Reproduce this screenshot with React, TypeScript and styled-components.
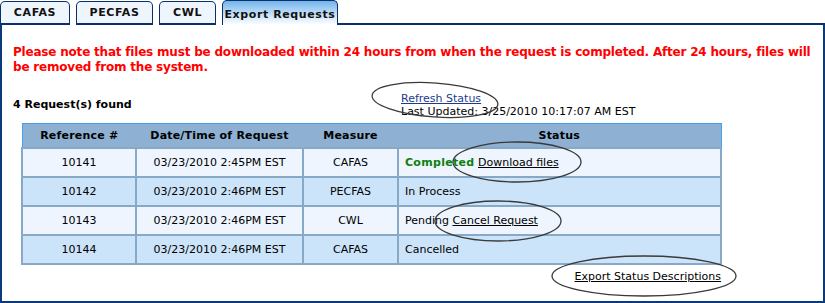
import React from 'react';
import styled, { createGlobalStyle } from 'styled-components';

const GlobalStyle = createGlobalStyle`
  html, body {
    margin: 0;
    padding: 0;
    background: #ffffff;
  }
  body {
    font-family: "DejaVu Sans", Verdana, sans-serif;
    font-size: 11px;
    color: #000;
  }
`;

const Page = styled.div`
  position: relative;
  width: 825px;
  height: 303px;
  overflow: hidden;
`;

const TabStrip = styled.div`
  display: flex;
  align-items: flex-end;
  height: 25px;
`;

const Tab = styled.div<{ $w: number; $active?: boolean }>`
  box-sizing: border-box;
  width: ${(p) => p.$w}px;
  height: ${(p) => (p.$active ? 25 : 24)}px;
  margin-right: 6px;
  display: flex;
  align-items: center;
  justify-content: center;
  border: 1px solid #0b2f6b;
  border-bottom: ${(p) => (p.$active ? 'none' : '2px solid #0b2f6b')};
  border-radius: 5px 5px 0 0;
  background: ${(p) =>
    p.$active
      ? 'linear-gradient(to bottom, #72b4ec 0%, #b6d9f7 45%, #ffffff 100%)'
      : '#eef5fd'};
  font-weight: bold;
  font-size: 11px;
  letter-spacing: 0.6px;
  color: #111;
  padding-top: ${(p) => (p.$active ? 2 : 0)}px;
`;

const TabFill = styled.div`
  flex: 1;
  height: 25px;
  box-sizing: border-box;
  border-bottom: 2px solid #0b2f6b;
  margin-left: -6px;
`;

const Panel = styled.div`
  box-sizing: border-box;
  height: 278px;
  border: 2px solid #0b3a7a;
  border-top: none;
  padding: 20px 0 0 11px;
`;

const Notice = styled.div`
  color: #ff0000;
  font-weight: bold;
  font-size: 12px;
  line-height: 15px;
  letter-spacing: -0.2px;
  padding-right: 4px;
`;

const InfoRow = styled.div`
  display: grid;
  grid-template-columns: 388px auto;
  align-items: end;
  margin-top: 15px;
  height: 28px;
`;

const Found = styled.div`
  font-weight: bold;
  line-height: 13px;
  margin-bottom: 7px;
`;

const Updated = styled.div`
  line-height: 13px;
`;

const BlueLink = styled.a`
  color: #1b3c8c;
  text-decoration: underline;
`;

const PlainLink = styled.a`
  color: #000;
  text-decoration: underline;
`;

const Table = styled.table`
  margin: 5px 0 0 8px;
  width: 701px;
  border-collapse: collapse;
  border: 1px solid #45a0ea;
`;

const Th = styled.th`
  height: 23px;
  padding: 0;
  background: #8eb0d2;
  font-weight: bold;
  font-size: 11px;
  border-bottom: 2px solid #87a9c6;
  letter-spacing: 0.2px;
`;

const Td = styled.td<{ $alt?: boolean; $left?: boolean }>`
  height: 27px;
  padding: 0 0 0 ${(p) => (p.$left ? 6 : 0)}px;
  text-align: ${(p) => (p.$left ? 'left' : 'center')};
  background: ${(p) => (p.$alt ? '#cce4fa' : '#eef5fe')};
  border: 2px solid #87a9c6;
  border-top: none;
`;

const Done = styled.span`
  color: #0e800e;
  font-weight: bold;
  letter-spacing: 0.3px;
`;

const Footer = styled.div`
  width: 708px;
  text-align: right;
  margin-top: 5px;
`;

const Marks = styled.svg`
  position: absolute;
  left: 0;
  top: 0;
  pointer-events: none;
`;

type Row = { ref: string; when: string; measure: string; status: React.ReactNode };

const rows: Row[] = [
  {
    ref: '10141',
    when: '03/23/2010 2:45PM EST',
    measure: 'CAFAS',
    status: (
      <>
        <Done>Completed</Done> <PlainLink href="#">Download files</PlainLink>
      </>
    ),
  },
  { ref: '10142', when: '03/23/2010 2:46PM EST', measure: 'PECFAS', status: 'In Process' },
  {
    ref: '10143',
    when: '03/23/2010 2:46PM EST',
    measure: 'CWL',
    status: (
      <>
        Pending <PlainLink href="#">Cancel Request</PlainLink>
      </>
    ),
  },
  { ref: '10144', when: '03/23/2010 2:46PM EST', measure: 'CAFAS', status: 'Cancelled' },
];

const App: React.FC = () => {
  return (
    <Page>
      <GlobalStyle />
      <TabStrip>
        <Tab $w={70}>CAFAS</Tab>
        <Tab $w={77}>PECFAS</Tab>
        <Tab $w={57}>CWL</Tab>
        <Tab $w={116} $active>
          Export Requests
        </Tab>
        <TabFill />
      </TabStrip>
      <Panel>
        <Notice>
          Please note that files must be downloaded within 24 hours from when the request is completed. After 24
          hours, files will be removed from the system.
        </Notice>
        <InfoRow>
          <Found>4 Request(s) found</Found>
          <Updated>
            <BlueLink href="#">Refresh Status</BlueLink>
            <br />
            Last Updated: 3/25/2010 10:17:07 AM EST
          </Updated>
        </InfoRow>
        <Table>
          <colgroup>
            <col style={{ width: 114 }} />
            <col style={{ width: 167 }} />
            <col style={{ width: 95 }} />
            <col />
          </colgroup>
          <thead>
            <tr>
              <Th>Reference #</Th>
              <Th>Date/Time of Request</Th>
              <Th>Measure</Th>
              <Th>Status</Th>
            </tr>
          </thead>
          <tbody>
            {rows.map((r, i) => (
              <tr key={r.ref}>
                <Td $alt={i % 2 === 1}>{r.ref}</Td>
                <Td $alt={i % 2 === 1}>{r.when}</Td>
                <Td $alt={i % 2 === 1}>{r.measure}</Td>
                <Td $alt={i % 2 === 1} $left>
                  {r.status}
                </Td>
              </tr>
            ))}
          </tbody>
        </Table>
        <Footer>
          <PlainLink href="#">Export Status Descriptions</PlainLink>
        </Footer>
      </Panel>
      <Marks width="825" height="303" viewBox="0 0 825 303">
        <g fill="none" stroke="#3a3a3a" strokeWidth="1.3">
          <ellipse cx="435" cy="100" rx="63" ry="17" transform="rotate(4 435 100)" />
          <ellipse cx="517" cy="162" rx="64" ry="20" />
          <ellipse cx="498" cy="221" rx="63" ry="20" />
          <ellipse cx="644" cy="276" rx="92" ry="20" />
        </g>
      </Marks>
    </Page>
  );
};

export default App;
